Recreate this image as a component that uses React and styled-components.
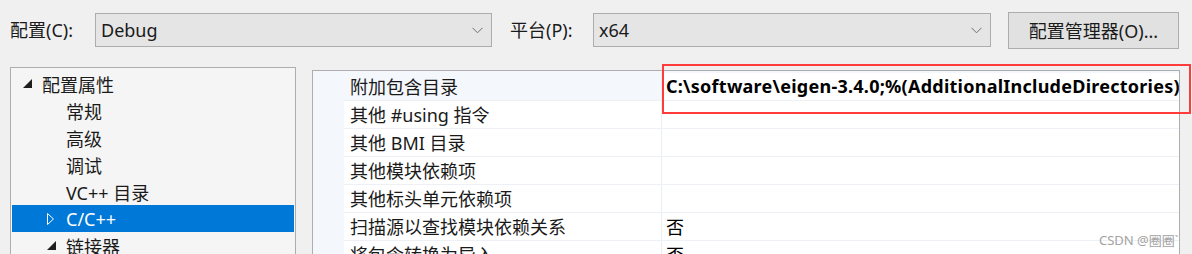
import React from "react";
import styled, { createGlobalStyle } from "styled-components";

const Global = createGlobalStyle`
  html, body {
    margin: 0;
    padding: 0;
    background: #f0f0f0;
    overflow: hidden;
  }
  body {
    font-family: "Noto Sans", "Noto Sans CJK SC", sans-serif;
    font-size: 18px;
    color: #1a1a1a;
  }
`;

const Page = styled.div`
  position: relative;
  width: 1192px;
  height: 254px;
  overflow: hidden;
  background: #f0f0f0;
`;

const Toolbar = styled.div`
  display: flex;
  align-items: center;
  height: 60px;
  padding-left: 10px;
`;

const Label = styled.div`
  width: ${(p) => p.$w}px;
  margin-left: ${(p) => p.$ml || 0}px;
  white-space: nowrap;
  line-height: 24px;
`;

const Combo = styled.div`
  box-sizing: border-box;
  width: ${(p) => p.$w}px;
  height: 34px;
  display: flex;
  align-items: center;
  justify-content: space-between;
  padding: 0 8px 0 5px;
  background: #e5e5e5;
  border: 1px solid #adadad;
  line-height: 24px;
`;

const Chevron = () => (
  <svg width="11" height="7" viewBox="0 0 11 7">
    <polyline points="0.5,0.8 5.5,5.8 10.5,0.8" fill="none" stroke="#707070" strokeWidth="1" />
  </svg>
);

const Button = styled.div`
  box-sizing: border-box;
  width: 171px;
  height: 37px;
  margin-left: 17px;
  display: flex;
  align-items: center;
  justify-content: center;
  background: #e1e1e1;
  border: 1px solid #adadad;
  white-space: nowrap;
`;

const Main = styled.div`
  display: flex;
  align-items: flex-start;
  padding-left: 10px;
`;

const Tree = styled.div`
  box-sizing: border-box;
  width: 286px;
  height: 220px;
  margin-top: 7px;
  padding: 2px 1px 0;
  background: #f5f5f5;
  border: 1px solid #adadad;
`;

const TreeRow = styled.div`
  display: flex;
  align-items: center;
  height: 27px;
  padding-left: ${(p) => 11 + p.$level * 24}px;
  background: ${(p) => (p.$selected ? "#0078d7" : "transparent")};
  color: ${(p) => (p.$selected ? "#ffffff" : "#1a1a1a")};
  white-space: nowrap;
`;

const Twisty = styled.span`
  display: inline-flex;
  align-items: center;
  width: 19px;
  height: 27px;
`;

const Expanded = () => (
  <svg width="9" height="9" viewBox="0 0 9 9">
    <polygon points="9,0 9,9 0,9" fill="#1e1e1e" />
  </svg>
);

const Collapsed = () => (
  <svg width="8" height="12" viewBox="0 0 8 12">
    <polygon points="0.5,0.5 6.5,6 0.5,11.5" fill="none" stroke="#ffffff" strokeWidth="1" />
  </svg>
);

const Grid = styled.div`
  box-sizing: border-box;
  width: 868px;
  height: 220px;
  margin-top: 10px;
  margin-left: 16px;
  padding: 2px 0 0 31px;
  background: #f4f7fb;
  border: 1px solid #adadad;
  overflow: hidden;
`;

const GridRow = styled.div`
  display: grid;
  grid-template-columns: 317px 1fr;
  height: 28px;
  box-sizing: border-box;
  border-bottom: 1px solid #edf1f6;
`;

const NameCell = styled.div`
  display: flex;
  align-items: center;
  padding-left: 6px;
  padding-bottom: 1px;
  background: ${(p) => (p.$active ? "#f4f7fb" : "#ffffff")};
  white-space: nowrap;
`;

const ValueCell = styled.div`
  display: flex;
  align-items: center;
  padding-left: 4px;
  padding-bottom: 1px;
  background: #ffffff;
  border-left: 1px solid #e9eef4;
  white-space: nowrap;
  overflow: hidden;
  font-weight: ${(p) => (p.$bold ? 700 : 400)};
  letter-spacing: ${(p) => (p.$bold ? "0.25px" : "normal")};
  color: #000;
`;

const Annotation = styled.div`
  position: absolute;
  left: 662px;
  top: 64px;
  width: 529px;
  height: 50px;
  box-sizing: border-box;
  border: 2px solid #ff3b3b;
  pointer-events: none;
`;

const Watermark = styled.div`
  position: absolute;
  left: 1099px;
  top: 230px;
  font-size: 13px;
  color: #a3a3a3;
  white-space: nowrap;
`;

const treeItems = [
  { label: "配置属性", level: 0, icon: "expanded" },
  { label: "常规", level: 1 },
  { label: "高级", level: 1 },
  { label: "调试", level: 1 },
  { label: "VC++ 目录", level: 1 },
  { label: "C/C++", level: 1, icon: "collapsed", selected: true },
  { label: "链接器", level: 1, icon: "expanded" },
];

const props = [
  { name: "附加包含目录", value: "C:\\software\\eigen-3.4.0;%(AdditionalIncludeDirectories)", bold: true, active: true },
  { name: "其他 #using 指令", value: "" },
  { name: "其他 BMI 目录", value: "" },
  { name: "其他模块依赖项", value: "" },
  { name: "其他标头单元依赖项", value: "" },
  { name: "扫描源以查找模块依赖关系", value: "否" },
  { name: "将包含转换为导入", value: "否" },
];

export default function App() {
  return (
    <Page>
      <Global />
      <Toolbar>
        <Label $w={85}>配置(C):</Label>
        <Combo $w={397}>
          <span>Debug</span>
          <Chevron />
        </Combo>
        <Label $w={83} $ml={18}>平台(P):</Label>
        <Combo $w={398}>
          <span>x64</span>
          <Chevron />
        </Combo>
        <Button>配置管理器(O)...</Button>
      </Toolbar>
      <Main>
        <Tree>
          {treeItems.map((it) => (
            <TreeRow key={it.label} $level={it.level} $selected={it.selected}>
              <Twisty>
                {it.icon === "expanded" && <Expanded />}
                {it.icon === "collapsed" && <Collapsed />}
              </Twisty>
              {it.label}
            </TreeRow>
          ))}
        </Tree>
        <Grid>
          {props.map((p) => (
            <GridRow key={p.name}>
              <NameCell $active={p.active}>{p.name}</NameCell>
              <ValueCell $bold={p.bold}>{p.value}</ValueCell>
            </GridRow>
          ))}
        </Grid>
      </Main>
      <Annotation />
      <Watermark>CSDN @圈圈`</Watermark>
    </Page>
  );
}
